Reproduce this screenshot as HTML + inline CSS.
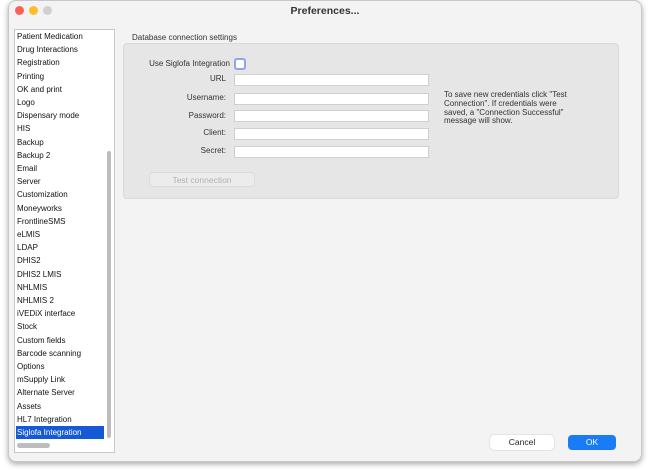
<!DOCTYPE html>
<html><head><style>
*{margin:0;padding:0;box-sizing:border-box}
body{width:650px;height:470px;background:#fff;font-family:"Liberation Sans",sans-serif;position:relative;overflow:hidden}
.win{position:absolute;left:8px;top:0;width:634px;height:462px;background:#f3f3f3;border-radius:8px;box-shadow:0 2px 6px rgba(0,0,0,.35);border:1px solid #c8c8c8}
.title{position:absolute;top:4px;left:0;width:100%;text-align:center;font-size:10.5px;font-weight:bold;color:#333}
.dot{position:absolute;top:5px;width:9px;height:9px;border-radius:50%}
.sep{position:absolute;left:0;top:20px;width:100%;height:1px;background:#ddd}
.list{position:absolute;left:14px;top:29px;width:101px;height:424px;background:#fff;border:1px solid #c9c9c9}
.it{position:absolute;left:1px;height:13px;font-size:8px;line-height:13px;color:#111;padding-left:1px;width:88px;white-space:nowrap}
.sel{background:#1659d6;color:#fff}
.vs{position:absolute;left:92px;top:121px;width:4px;height:287px;background:#bdbdbd;border-radius:2px}
.hs{position:absolute;left:2px;top:413px;width:33px;height:5px;background:#bdbdbd;border-radius:3px}
.gl{position:absolute;left:132px;top:33px;font-size:8px;color:#333}
.grp{position:absolute;left:123px;top:43px;width:496px;height:156px;background:#e6e6e6;border:1px solid #dadada;border-radius:4px}
.lb{position:absolute;font-size:8px;color:#333;text-align:right;width:100px}
.fld{position:absolute;left:234px;width:195px;height:12px;background:#fff;border:1px solid #cfcfcf}
.help{position:absolute;left:444px;top:91px;font-size:8px;line-height:8.8px;color:#333;width:130px}
.btn{position:absolute;border-radius:4px;font-size:8.5px;text-align:center;line-height:15px}
</style></head><body>
<div class="win">
<div class="dot" style="left:6px;background:#fe5f57"></div>
<div class="dot" style="left:20px;background:#febc2e"></div>
<div class="dot" style="left:34px;background:#d0d0d0"></div>
<div class="title">Preferences...</div>
</div>
<div class="list">
<div class="it" style="top:0px">Patient Medication</div>
<div class="it" style="top:13px">Drug Interactions</div>
<div class="it" style="top:26px">Registration</div>
<div class="it" style="top:40px">Printing</div>
<div class="it" style="top:53px">OK and print</div>
<div class="it" style="top:66px">Logo</div>
<div class="it" style="top:79px">Dispensary mode</div>
<div class="it" style="top:92px">HIS</div>
<div class="it" style="top:106px">Backup</div>
<div class="it" style="top:119px">Backup 2</div>
<div class="it" style="top:132px">Email</div>
<div class="it" style="top:145px">Server</div>
<div class="it" style="top:158px">Customization</div>
<div class="it" style="top:172px">Moneyworks</div>
<div class="it" style="top:185px">FrontlineSMS</div>
<div class="it" style="top:198px">eLMIS</div>
<div class="it" style="top:211px">LDAP</div>
<div class="it" style="top:224px">DHIS2</div>
<div class="it" style="top:238px">DHIS2 LMIS</div>
<div class="it" style="top:251px">NHLMIS</div>
<div class="it" style="top:264px">NHLMIS 2</div>
<div class="it" style="top:277px">iVEDiX interface</div>
<div class="it" style="top:290px">Stock</div>
<div class="it" style="top:304px">Custom fields</div>
<div class="it" style="top:317px">Barcode scanning</div>
<div class="it" style="top:330px">Options</div>
<div class="it" style="top:343px">mSupply Link</div>
<div class="it" style="top:356px">Alternate Server</div>
<div class="it" style="top:370px">Assets</div>
<div class="it" style="top:383px">HL7 Integration</div>
<div class="it sel" style="top:396px">Siglofa Integration</div>
<div class="vs"></div>
<div class="hs"></div>
</div>
<div class="gl">Database connection settings</div>
<div class="grp"></div>
<div class="lb" style="left:130px;top:59px">Use Siglofa Integration</div>
<div style="position:absolute;left:234px;top:58px;width:12px;height:12px;border-radius:3px;background:#fff;border:2px solid #8ea6ec"></div>
<div class="lb" style="left:126px;top:74px">URL</div>
<div class="lb" style="left:126px;top:93px">Username:</div>
<div class="lb" style="left:126px;top:111px">Password:</div>
<div class="lb" style="left:126px;top:128px">Client:</div>
<div class="lb" style="left:126px;top:146px">Secret:</div>
<div class="fld" style="top:74px"></div>
<div class="fld" style="top:93px"></div>
<div class="fld" style="top:110px"></div>
<div class="fld" style="top:128px"></div>
<div class="fld" style="top:146px"></div>
<div class="help">To save new credentials click "Test Connection". If credentials were saved, a "Connection Successful" message will show.</div>
<div class="btn" style="left:149px;top:172px;width:106px;height:15px;background:#ececec;color:#b0b0b0;border:1px solid #dcdcdc">Test connection</div>
<div class="btn" style="left:490px;top:435px;width:64px;height:15px;background:#fff;color:#222;box-shadow:0 0 1px rgba(0,0,0,.4)">Cancel</div>
<div class="btn" style="left:568px;top:435px;width:48px;height:15px;background:#1a7cf5;color:#fff">OK</div>
</body></html>
